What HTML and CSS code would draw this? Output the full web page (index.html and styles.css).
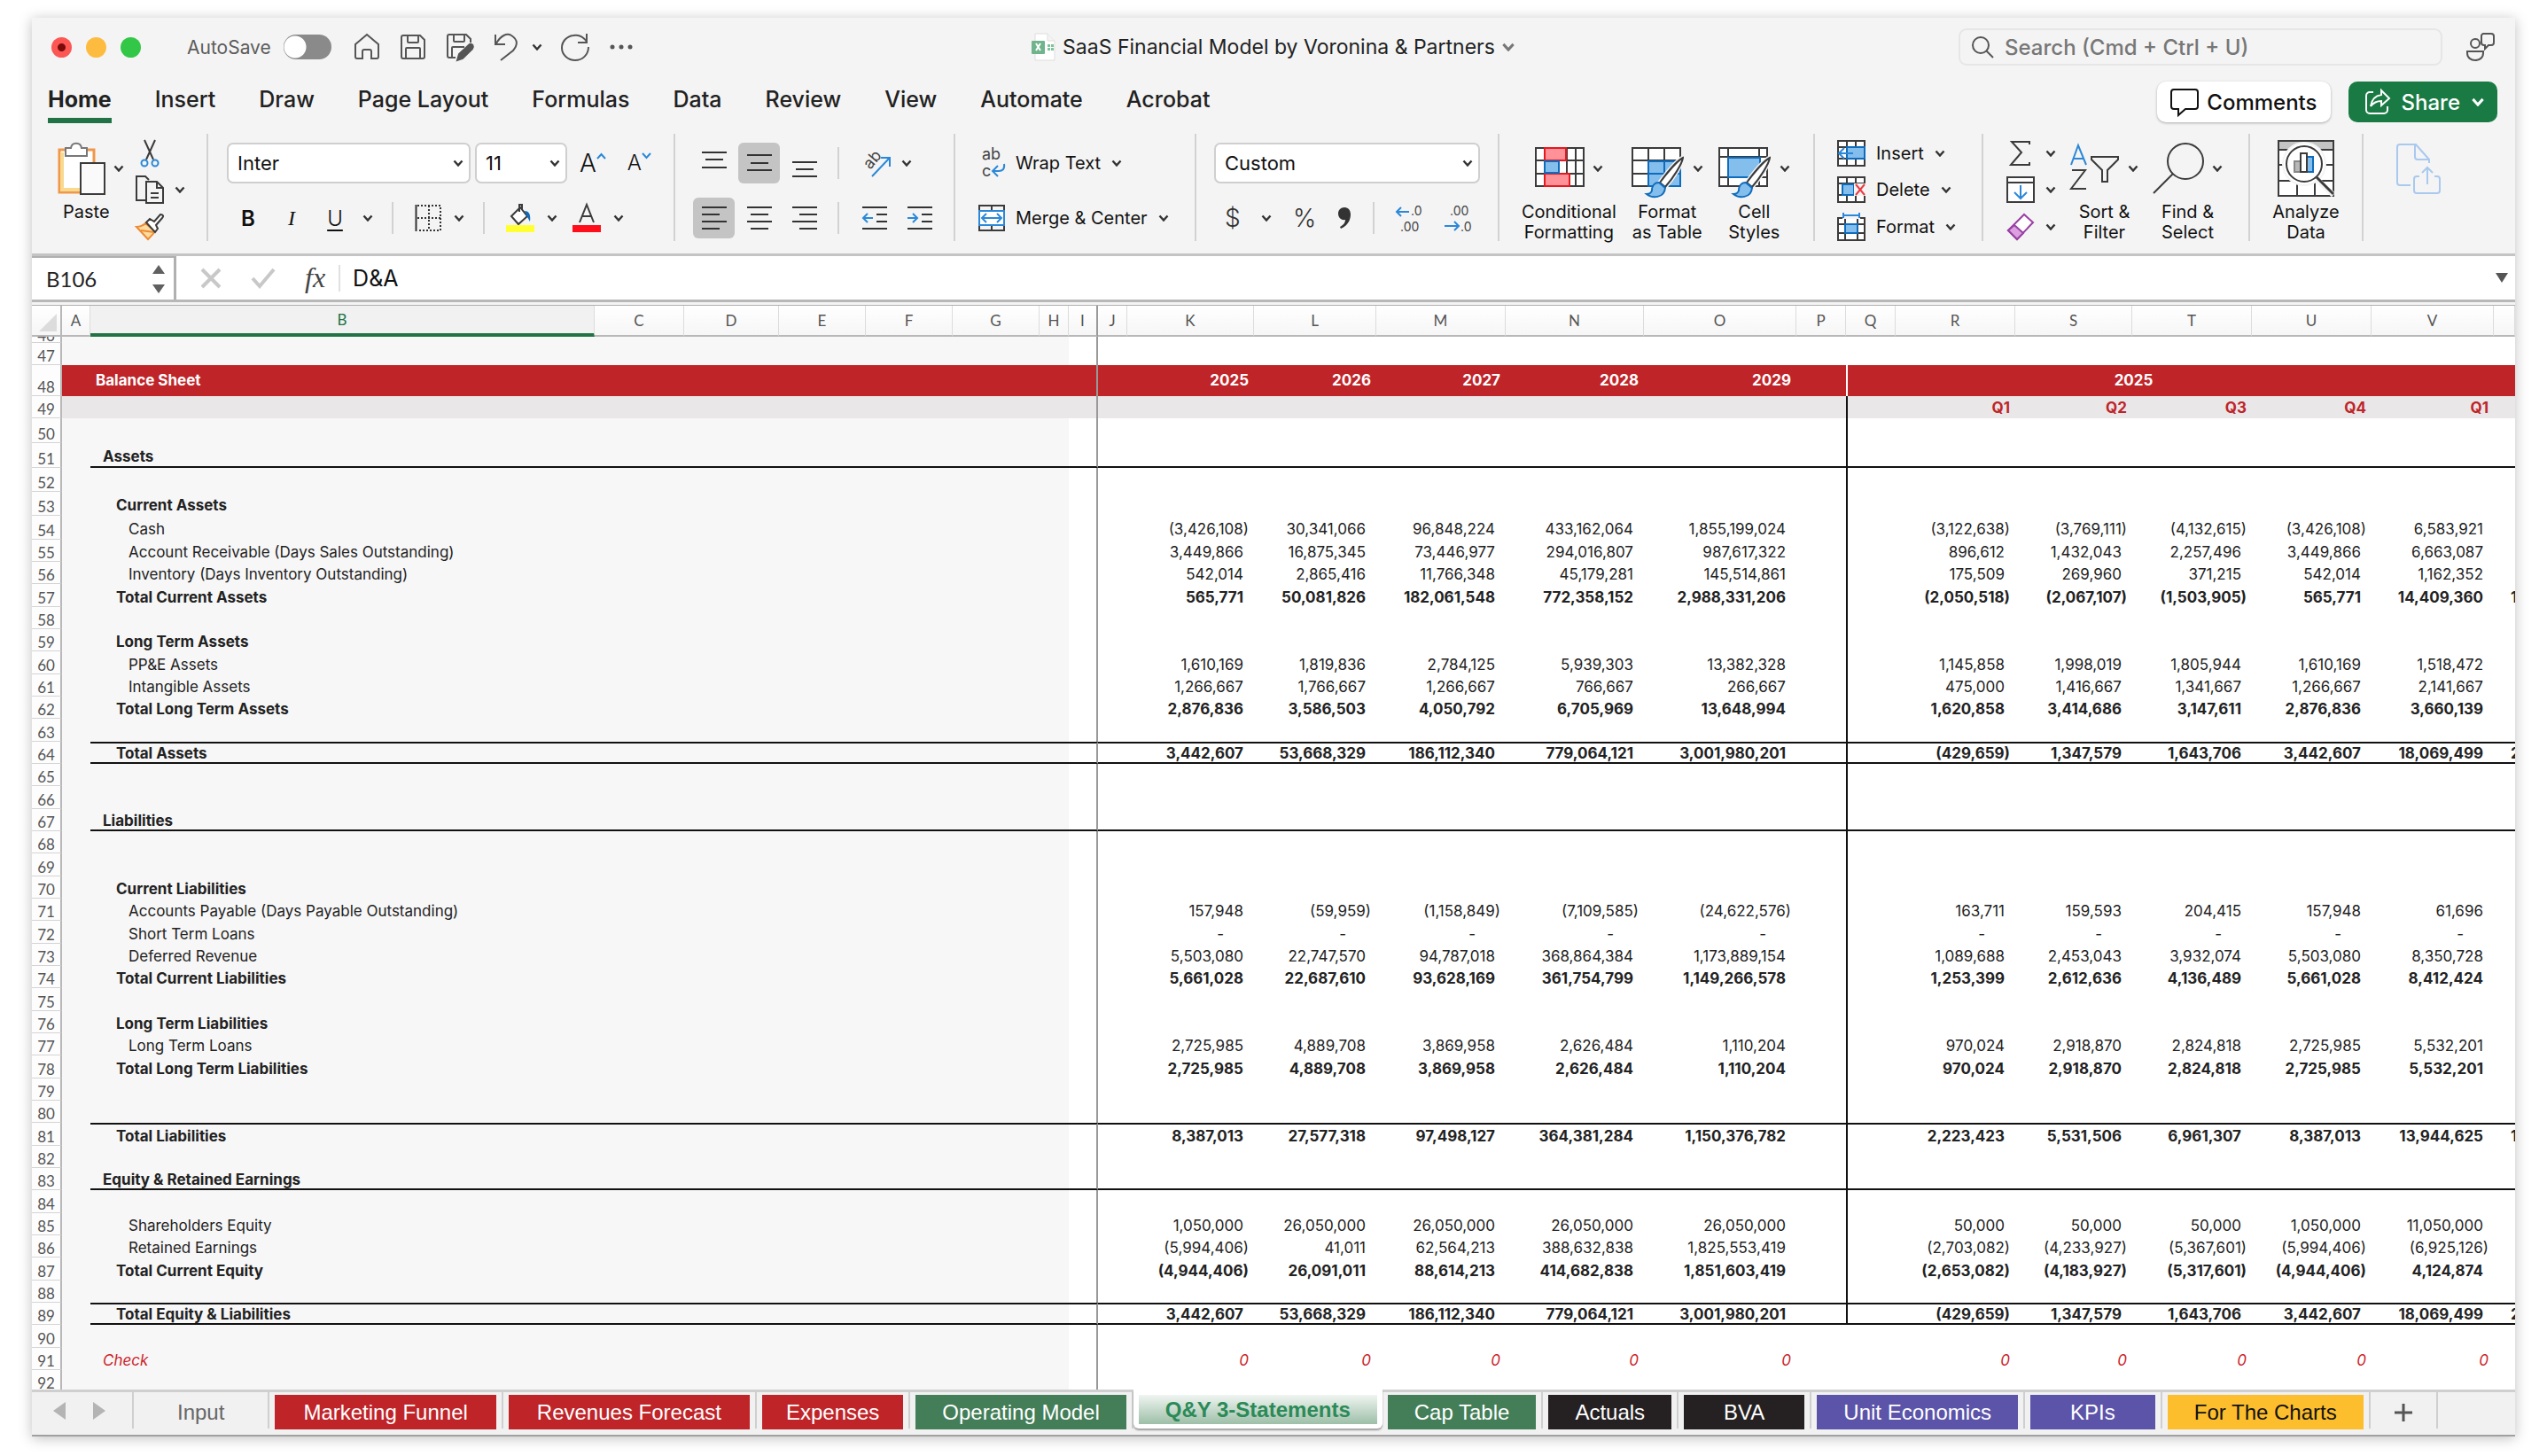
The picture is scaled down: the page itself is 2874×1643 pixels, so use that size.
FILE: index.html
```html
<!DOCTYPE html>
<html lang="en">
<head>
    <meta charset="UTF-8">
    <meta name="viewport" content="width=device-width, initial-scale=1.0">
    <title>SaaS Financial Model by Voronina &amp; Partners</title>
    <link rel="stylesheet" href="styles.css">
</head>
<body>
    <svg class="defs" width="0" height="0">
        <symbol id="chev" viewBox="0 0 12 8"><path d="M1.5 1.5 6 6.5 10.500 1.500" fill="none" stroke="currentColor" stroke-width="2.400"/></symbol>
        <symbol id="brush" viewBox="0 0 46 48"><path d="M45 2C39 5 27 19 19 30l6 5C34 25 44 9 45 2z" fill="#fff" stroke="#f4f4f4" stroke-width="5"/><path d="M45 2C39 5 27 19 19 30l6 5C34 25 44 9 45 2z" fill="#fff" stroke="#3b3b3b" stroke-width="2"/><path d="M18 30c-6 0-8 5-8 9-1 3-3 4-6 4 6 5 20 5 21-7z" fill="#83beec" stroke="#0f6cbd" stroke-width="2"/></symbol>
    </svg>
    <div class="app">
        <header class="titlebar">
            <div class="tools">
                <span class="light red"></span><span class="light yellow"></span><span class="light green"></span>
                <label class="autosave">AutoSave <input type="checkbox" class="switch"></label>
                <button class="plain" aria-label="Home"><svg width="30" height="32" viewBox="0 0 30 32" class="line"><path d="M2 13 15 2l13 11v14a2 2 0 0 1-2 2h-6v-8a2 2 0 0 0-2-2h-6a2 2 0 0 0-2 2v8H4a2 2 0 0 1-2-2z"/></svg></button>
                <button class="plain" aria-label="Save"><svg width="30" height="30" viewBox="0 0 30 30" class="line"><path d="M2 4a2 2 0 0 1 2-2h19l5 5v19a2 2 0 0 1-2 2H4a2 2 0 0 1-2-2zM9 2v7a1 1 0 0 0 1 1h10a1 1 0 0 0 1-1V2M7 28V17a1 1 0 0 1 1-1h14a1 1 0 0 1 1 1v11"/></svg></button>
                <button class="plain" aria-label="Save as"><svg width="32" height="32" viewBox="0 0 32 32" class="line"><path d="M11 28H4a2 2 0 0 1-2-2V4a2 2 0 0 1 2-2h19l5 5v4M9 2v7a1 1 0 0 0 1 1h10a1 1 0 0 0 1-1V2M7 28V17a1 1 0 0 1 1-1h13"/><path d="M13 31l2-7 12-11c3-1 5 2 3 5L19 29z" fill="#555"/></svg></button>
                <button class="plain" aria-label="Undo"><svg width="28" height="34" viewBox="0 0 28 34" class="line"><path d="M2 3v11h11M3 13C8 4 15 1 20 4c8 5 7 11 2 17L8 32"/></svg></button>
                <svg class="chev"><use href="#chev"/></svg>
                <button class="plain" aria-label="Redo"><svg width="34" height="34" viewBox="0 0 34 34" class="line"><path d="M30 2v10H20M30 11C26 5 20 3 15 4 7 5 2 11 2 18c0 8 7 14 15 14s15-6 15-15"/></svg></button>
                <button class="plain" aria-label="More"><svg width="26" height="6" viewBox="0 0 26 6" fill="#555"><circle cx="3" cy="3" r="2.500"/><circle cx="13" cy="3" r="2.500"/><circle cx="23" cy="3" r="2.500"/></svg></button>
            </div>
            <div class="doc-title">
                <svg width="28" height="32" viewBox="0 0 28 32"><path d="M4 1h14l8 8v22H4z" fill="#fff" stroke="#ddd"/><path d="M18 1v8h8" fill="#f4f4f4" stroke="#ddd"/><path d="M18 13h3v3h-3zm4 0h3v3h-3zm-4 4h3v3h-3zm4 0h3v3h-3z" fill="#7fc39b"/><rect y="9" width="15" height="15" rx="1" fill="#6fb48c"/><path d="m5 12 5 8M10 12l-5 8" stroke="#fff" stroke-width="2"/></svg>
                <span>SaaS Financial Model by Voronina &amp; Partners</span>
                <svg class="chev wide"><use href="#chev"/></svg>
            </div>
            <div class="finder">
                <label class="search"><svg width="26" height="26" viewBox="0 0 26 26" class="line"><circle cx="11" cy="11" r="9"/><path d="m17 17 8 8"/></svg><input type="text" placeholder="Search (Cmd + Ctrl + U)" aria-label="Search"></label>
                <button class="plain" aria-label="Presence"><svg width="34" height="34" viewBox="0 0 34 34" class="line"><circle cx="11" cy="13" r="5"/><path d="M2 22h18v2c0 5-4 8-9 8s-9-3-9-8zM20 2h9a3 3 0 0 1 3 3v7a3 3 0 0 1-3 3h-3l-4 4v-4h-1a3 3 0 0 1-3-3V4a3 3 0 0 1 2-2z"/></svg></button>
            </div>
        </header>

        <nav class="menu">
            <a href="#" class="current">Home</a><a href="#">Insert</a><a href="#">Draw</a><a href="#">Page Layout</a><a href="#">Formulas</a><a href="#">Data</a><a href="#">Review</a><a href="#">View</a><a href="#">Automate</a><a href="#">Acrobat</a>
            <div class="menu-right">
                <button class="comments"><svg width="32" height="32" viewBox="0 0 32 32" fill="none" stroke="#111" stroke-width="2"><path d="M4 2h24a3 3 0 0 1 3 3v16a3 3 0 0 1-3 3H17l-8 7v-7H4a3 3 0 0 1-3-3V5a3 3 0 0 1 3-3z"/></svg>Comments</button>
                <button class="share"><svg width="30" height="30" viewBox="0 0 30 30" fill="none" stroke="#fff" stroke-width="2"><path d="M10 4H6a4 4 0 0 0-4 4v16a4 4 0 0 0 4 4h16a4 4 0 0 0 4-4v-4M19 2l9 9-9 8v-5c-6 0-9 2-12 6 1-7 5-12 12-13z"/></svg>Share<svg class="chev wide"><use href="#chev"/></svg></button>
            </div>
        </nav>

        <section class="ribbon">
            <div class="group clipboard">
                <div class="big">
                    <div class="pic"><svg width="54" height="60" viewBox="0 0 54 60"><path d="M2 9h39v48H2z" fill="#fff" stroke="#f0974a" stroke-width="3"/><path d="M5 12v42h22" fill="none" stroke="#f8d98e" stroke-width="4"/><path d="M9 16V7h6c1-7 11-7 12 0h6v9z" fill="#fff" stroke="#777" stroke-width="2"/><path d="M26 24h27v35H26z" fill="#fafafa" stroke="#3b3b3b" stroke-width="2"/></svg><svg class="chev"><use href="#chev"/></svg></div>
                    <button class="plain">Paste</button>
                </div>
                <div class="stack">
                    <button class="plain" aria-label="Cut"><svg width="22" height="32" viewBox="0 0 22 32" fill="none" stroke="#3b3b3b" stroke-width="2"><path d="M5 1l10 22M17 1 7 23"/><g stroke="#2b88d8"><circle cx="5" cy="27" r="3.500"/><circle cx="17" cy="27" r="3.500"/></g></svg></button>
                    <button class="plain" aria-label="Copy"><svg width="32" height="32" viewBox="0 0 32 32" fill="none" stroke="#3b3b3b" stroke-width="2"><path d="M11 28H1V1h10l4 4"/><path d="M12 7h12l7 7v17H12zM24 7v7h7M17 20h9M17 25h9"/></svg><svg class="chev"><use href="#chev"/></svg></button>
                    <button class="plain" aria-label="Format painter"><svg width="32" height="30" viewBox="0 0 32 30"><path d="M1 15c5 0 8-2 10-4l11 9c-2 3-5 6-8 9z" fill="#fbdca0" stroke="#ef8a33" stroke-width="2"/><path d="m6 19 15 2" stroke="#ef8a33" stroke-width="2"/><path d="m12 10 4-4 5 3 7-8c3 0 4 2 2 4l-7 8 2 4-3 4z" fill="#fff" stroke="#3b3b3b" stroke-width="2"/></svg></button>
                </div>
            </div>

            <div class="group rows font">
                <div class="row">
                    <div class="combo name"><select aria-label="Font"><option>Inter</option></select><svg class="chev"><use href="#chev"/></svg></div>
                    <div class="combo size"><select aria-label="Font size"><option>11</option></select><svg class="chev"><use href="#chev"/></svg></div>
                    <button class="plain grow">A<svg width="11" height="8" viewBox="0 0 11 8"><path d="m1 7 4.500-5L10 7" fill="none" stroke="#2b88d8" stroke-width="2"/></svg></button>
                    <button class="plain grow small">A<svg width="11" height="8" viewBox="0 0 11 8"><path d="m1 1 4.500 5L10 1" fill="none" stroke="#2b88d8" stroke-width="2"/></svg></button>
                </div>
                <div class="row marks">
                    <button class="plain bold">B</button>
                    <button class="plain italic">I</button>
                    <button class="plain underline">U</button>
                    <svg class="chev"><use href="#chev"/></svg>
                    <i class="bar"></i>
                    <button class="plain" aria-label="Borders"><svg width="30" height="32" viewBox="0 0 30 32" fill="none" stroke="#333" stroke-width="2"><path d="M1.500 1v30" /><path d="M3 2h26v28H3M16 2v28M3 16h26" stroke-dasharray="2 2"/></svg></button>
                    <svg class="chev"><use href="#chev"/></svg>
                    <i class="bar"></i>
                    <button class="plain" aria-label="Fill colour"><svg width="32" height="32" viewBox="0 0 32 32"><path d="M6 14 16 4l8 10-10 9zM15 9V1h3v5" fill="#fff" stroke="#3b3b3b" stroke-width="2"/><path d="M21 8c5 0 7 4 6 12l-3-5z" fill="#0f6cbd"/><path d="M0 24h32v8H0z" fill="#ffff33"/></svg></button>
                    <svg class="chev"><use href="#chev"/></svg>
                    <button class="plain" aria-label="Font colour"><svg width="32" height="32" viewBox="0 0 32 32"><path d="M8 21 16 1l8 20M11 14h10" fill="none" stroke="#3b3b3b" stroke-width="2"/><path d="M0 24h32v8H0z" fill="#ff0d1a"/></svg></button>
                    <svg class="chev"><use href="#chev"/></svg>
                </div>
            </div>

            <div class="group rows align">
                <div class="row">
                    <button class="tile" aria-label="Top align"><svg width="28" height="36" viewBox="0 0 28 36" class="lines"><path d="M0 6h28M4 14h20M0 23h28"/></svg></button>
                    <button class="tile on" aria-label="Middle align"><svg width="28" height="36" viewBox="0 0 28 36" class="lines"><path d="M0 9h28M4 18h20M0 26h28"/></svg></button>
                    <button class="tile" aria-label="Bottom align"><svg width="28" height="36" viewBox="0 0 28 36" class="lines"><path d="M0 17h28M4 25h20M0 33h28"/></svg></button>
                    <i class="bar"></i>
                    <button class="plain" aria-label="Orientation"><svg width="32" height="32" viewBox="0 0 32 32"><text transform="translate(9 24) rotate(-50)" class="glyph">ab</text><path d="M11 31 30 11M21 10h10v10" fill="none" stroke="#2b88d8" stroke-width="2"/></svg></button>
                    <svg class="chev"><use href="#chev"/></svg>
                </div>
                <div class="row">
                    <button class="tile on" aria-label="Align left"><svg width="28" height="28" viewBox="0 0 28 28" class="lines"><path d="M0 2h28M0 10h20M0 18h28M0 26h20"/></svg></button>
                    <button class="tile" aria-label="Centre"><svg width="28" height="28" viewBox="0 0 28 28" class="lines"><path d="M0 2h28M4 10h20M0 18h28M4 26h20"/></svg></button>
                    <button class="tile" aria-label="Align right"><svg width="28" height="28" viewBox="0 0 28 28" class="lines"><path d="M0 2h28M8 10h20M0 18h28M8 26h20"/></svg></button>
                    <i class="bar"></i>
                    <button class="plain indent" aria-label="Decrease indent"><svg width="28" height="28" viewBox="0 0 28 28" class="lines"><path d="M0 2h28M16 10h12M16 18h12M0 26h28"/><path d="M12 14H1M6 9l-5 5 5 5" stroke="#2b88d8"/></svg></button>
                    <button class="plain indent" aria-label="Increase indent"><svg width="28" height="28" viewBox="0 0 28 28" class="lines"><path d="M0 2h28M16 10h12M16 18h12M0 26h28"/><path d="M0 14h11M6 9l5 5-5 5" stroke="#2b88d8"/></svg></button>
                </div>
            </div>

            <div class="group rows wrap">
                <div class="row"><button class="plain text"><svg width="30" height="32" viewBox="0 0 30 32"><text x="4" y="12" class="glyph">ab</text><text x="4" y="31" class="glyph">c</text><path d="M29 17c1 6-2 8-6 8h-6M22 19l-6 6 6 6" fill="none" stroke="#2b88d8" stroke-width="2"/></svg>Wrap Text<svg class="chev"><use href="#chev"/></svg></button></div>
                <div class="row"><button class="plain text"><svg width="30" height="32" viewBox="0 0 30 32" fill="none" stroke="#3b3b3b" stroke-width="2"><path d="M1 2h28v28H1zM15 2v5M15 25v5"/><path d="M1 8h28v16H1z" fill="#fff" stroke="#2b88d8"/><path d="M5 16h20M9 11l-5 5 5 5M21 11l5 5-5 5" stroke="#2b88d8"/></svg>Merge &amp; Center<svg class="chev"><use href="#chev"/></svg></button></div>
            </div>

            <div class="group rows number">
                <div class="row"><div class="combo"><select aria-label="Number format"><option>Custom</option></select><svg class="chev"><use href="#chev"/></svg></div></div>
                <div class="row">
                    <button class="plain sign">$</button>
                    <svg class="chev"><use href="#chev"/></svg>
                    <button class="plain sign">%</button>
                    <button class="plain" aria-label="Comma style"><svg width="16" height="26" viewBox="0 0 16 26"><path d="M8 1c5 0 7 4 7 8 0 7-4 13-11 16l-1-2c4-2 6-5 6-8-5 1-8-3-8-7s3-7 7-7z" fill="#333"/></svg></button>
                    <i class="bar"></i>
                    <button class="plain" aria-label="Increase decimal"><svg width="32" height="32" viewBox="0 0 32 32"><text x="18" y="13" class="digits">.0</text><text x="6" y="31" class="digits">.00</text><path d="M16 9H2M7 4l-5 5 5 5" fill="none" stroke="#2b88d8" stroke-width="2"/></svg></button>
                    <button class="plain" aria-label="Decrease decimal"><svg width="32" height="32" viewBox="0 0 32 32"><text x="6" y="13" class="digits">.00</text><text x="18" y="31" class="digits">.0</text><path d="M0 25h16M11 20l5 5-5 5" fill="none" stroke="#2b88d8" stroke-width="2"/></svg></button>
                </div>
            </div>

            <div class="group bigs styles">
                <div class="big">
                    <div class="pic"><svg width="56" height="60" viewBox="0 0 56 60" fill="#fff" stroke="#3b3b3b" stroke-width="2"><path d="M1 7h54v43H1zM1 21h54M1 36h54M11 7v43M36 7v43M46 7v43"/><path d="M11 7h24v14H11zM11 36h28v14H11z" fill="#ff9298" stroke="#e3191f"/><path d="M11 22h16v13H11z" fill="#83beec" stroke="#0f6cbd"/></svg><svg class="chev"><use href="#chev"/></svg></div>
                    <button class="plain">Conditional<br>Formatting</button>
                </div>
                <div class="big">
                    <div class="pic"><svg width="60" height="60" viewBox="0 0 60 60" fill="#fff" stroke="#3b3b3b" stroke-width="2"><path d="M1 7h54v43H1zM1 21h54M1 36h54M19 7v43M37 7v43"/><path d="M19 22h36v28H19zM19 36h36M37 22v28" fill="#83beec" stroke="#0f6cbd"/><use href="#brush" x="13" y="16" width="46" height="48"/></svg><svg class="chev"><use href="#chev"/></svg></div>
                    <button class="plain">Format<br>as Table</button>
                </div>
                <div class="big">
                    <div class="pic"><svg width="60" height="60" viewBox="0 0 60 60" fill="#fff" stroke="#3b3b3b" stroke-width="2"><path d="M1 7h54v43H1zM1 17h54M1 40h54M11 7v43M46 7v43"/><path d="M11 18h36v22H11z" fill="#83beec" stroke="#0f6cbd"/><use href="#brush" x="13" y="16" width="46" height="48"/></svg><svg class="chev"><use href="#chev"/></svg></div>
                    <button class="plain">Cell<br>Styles</button>
                </div>
            </div>

            <div class="group stack cells">
                <button class="plain text"><svg width="32" height="30" viewBox="0 0 32 30" fill="#fff" stroke="#3b3b3b" stroke-width="2"><path d="M1 1h30v28H1zM1 8h30M1 21h30M11 1v28M21 1v28"/><path d="M11 8h20v13H11z" fill="#83beec" stroke="#0f6cbd"/><path d="M18 15H2M8 9l-6 6 6 6" stroke="#2b88d8"/></svg>Insert<svg class="chev"><use href="#chev"/></svg></button>
                <button class="plain text"><svg width="32" height="30" viewBox="0 0 32 30" fill="#fff" stroke="#3b3b3b" stroke-width="2"><path d="M1 1h30v28H1zM1 8h30M1 21h30M11 1v28M21 1v28"/><path d="M6 9h13v12H6z" fill="#83beec" stroke="#0f6cbd"/><path d="M19 8h14v14H19z" stroke="none" fill="#f4f4f4"/><path d="m21 9 10 12M31 9 21 21" stroke="#ec3b43"/></svg>Delete<svg class="chev"><use href="#chev"/></svg></button>
                <button class="plain text"><svg width="32" height="32" viewBox="0 0 32 32" fill="#fff" stroke="#3b3b3b" stroke-width="2"><path d="M1 6h30v25H1zM1 13h30M1 23h30M9 6v25M23 6v25"/><path d="M6 0h20v7H6z" stroke="none" fill="#f4f4f4"/><path d="M9 13h14v10H9z" fill="#83beec" stroke="#0f6cbd"/><path d="M7 3h18M7 0v6M25 0v6" stroke="#2b88d8"/></svg>Format<svg class="chev"><use href="#chev"/></svg></button>
            </div>

            <div class="group editing">
                <div class="stack">
                    <button class="plain" aria-label="AutoSum"><svg width="32" height="30" viewBox="0 0 32 30" fill="none" stroke="#3b3b3b" stroke-width="2"><path d="M26 5V2H6l11 12L5 28h21v-3"/></svg><svg class="chev"><use href="#chev"/></svg></button>
                    <button class="plain" aria-label="Fill"><svg width="32" height="30" viewBox="0 0 32 30" fill="#fff" stroke="#3b3b3b" stroke-width="2"><path d="M1 1h30v28H1zM1 7h30"/><path d="M16 10v14M9 18l7 7 7-7" stroke="#2b88d8" fill="none"/></svg><svg class="chev"><use href="#chev"/></svg></button>
                    <button class="plain" aria-label="Clear"><svg width="32" height="32" viewBox="0 0 32 32" fill="#fff" stroke="#9a3fa5" stroke-width="2"><path d="m2 20 18-18 10 9-18 19z"/><path d="m2 20 7-6 10 9-7 7z" fill="#dba0dd"/></svg><svg class="chev"><use href="#chev"/></svg></button>
                </div>
                <div class="big">
                    <div class="pic"><svg width="56" height="60" viewBox="0 0 56 60" fill="none" stroke="#3b3b3b" stroke-width="2"><path d="M1 26 9 4l9 22M4 19h11" stroke="#2b88d8"/><path d="M2 32h15L1 53h17M24 17h30v3L42 32v13h-6V32L24 20z"/></svg><svg class="chev"><use href="#chev"/></svg></div>
                    <button class="plain">Sort &amp;<br>Filter</button>
                </div>
                <div class="big">
                    <div class="pic"><svg width="58" height="60" viewBox="0 0 58 60" fill="none" stroke="#3b3b3b" stroke-width="2"><circle cx="37" cy="22" r="20"/><path d="M23 36 1 58"/></svg><svg class="chev"><use href="#chev"/></svg></div>
                    <button class="plain">Find &amp;<br>Select</button>
                </div>
            </div>

            <div class="group analyze">
                <div class="big">
                    <div class="pic"><svg width="64" height="64" viewBox="0 0 64 64" fill="#fff" stroke="#3b3b3b" stroke-width="2"><path d="M1 1h62v62H1z"/><path d="M2 2h60v8H2z" fill="#c4c4c4" stroke="none"/><path d="M1 11h62M1 28h62M1 46h62M22 46v17M42 46v17"/><circle cx="30" cy="27" r="24" stroke="#f4f4f4"/><path d="m44 44 19 18" stroke="#f4f4f4" stroke-width="6"/><circle cx="30" cy="27" r="20"/><path d="m44 42 19 19" stroke-width="3"/><path d="M19 24h7v12h-7z" fill="#b8b8b8" stroke="#888"/><path d="M33 19h7v17h-7z" fill="#83beec" stroke="#0f6cbd"/><path d="M26 15h7v21h-7z"/></svg></div>
                    <button class="plain">Analyze<br>Data</button>
                </div>
            </div>
            <div class="group pdf">
                <button class="plain" aria-label="Share PDF"><svg width="50" height="58" viewBox="0 0 50 58" fill="none" stroke="#a9c9ef" stroke-width="2"><path d="M16 47H4a3 3 0 0 1-3-3V4a3 3 0 0 1 3-3h18l15 17v4M21 1v14a3 3 0 0 0 3 3h13M26 37h-3a3 3 0 0 0-3 3v13a3 3 0 0 0 3 3h23a3 3 0 0 0 3-3V40a3 3 0 0 0-3-3h-3M35 46V27M29 33l6-6 6 6"/></svg></button>
            </div>
        </section>

        <section class="formula">
            <div class="namebox"><input type="text" value="B106" aria-label="Name box"><svg width="14" height="32" viewBox="0 0 14 32" fill="#606060"><path d="M0 10 7 0l7 10zM0 22h14L7 32z"/></svg></div>
            <button class="plain" aria-label="Cancel"><svg width="24" height="24" viewBox="0 0 24 24"><path d="m2 2 20 20M22 2 2 22" stroke="#c8c8c8" stroke-width="4"/></svg></button>
            <button class="plain" aria-label="Enter"><svg width="28" height="24" viewBox="0 0 28 24"><path d="m2 12 8 9L26 2" fill="none" stroke="#c8c8c8" stroke-width="4"/></svg></button>
            <button class="plain fx">fx</button>
            <input type="text" class="entry" value="D&amp;A" aria-label="Formula">
            <svg width="14" height="11" viewBox="0 0 14 11"><path d="M0 0h14L7 11z" fill="#555"/></svg>
        </section>

        <main class="sheet">
            <table>
                <colgroup>
                    <col class="c34"><col class="c32"><col class="cb"><col class="c101"><col class="c107"><col class="c98"><col class="c98"><col class="c98"><col class="c33"><col class="c33"><col class="c33"><col class="c143"><col class="c138"><col class="c146"><col class="c156"><col class="c172"><col class="c56"><col class="c56"><col class="c135"><col class="c132"><col class="c135"><col class="c135"><col class="c138"><col>
                </colgroup>
                <thead>
                    <tr><th class="corner"><svg width="20" height="20" viewBox="0 0 20 20"><path d="M20 0v20H0z" fill="#dcdcdc"/></svg></th><th>A</th><th class="selected">B</th><th>C</th><th>D</th><th>E</th><th>F</th><th>G</th><th>H</th><th class="freeze">I</th><th>J</th><th>K</th><th>L</th><th>M</th><th>N</th><th>O</th><th>P</th><th>Q</th><th>R</th><th>S</th><th>T</th><th>U</th><th>V</th><th></th></tr>
                </thead>
                <tbody id="rows"></tbody>
            </table>
        </main>

        <footer class="tabs">
            <div class="arrows">
                <button class="plain" aria-label="Previous sheet"><svg width="14" height="20" viewBox="0 0 14 20"><path d="M14 0v20L0 10z" fill="#b4b4b4"/></svg></button>
                <button class="plain" aria-label="Next sheet"><svg width="14" height="20" viewBox="0 0 14 20"><path d="M0 0v20l14-10z" fill="#b4b4b4"/></svg></button>
            </div>
            <div class="tab input"><button>Input</button></div>
            <div class="tab crimson"><button>Marketing Funnel</button></div>
            <div class="tab crimson"><button>Revenues Forecast</button></div>
            <div class="tab crimson snug"><button>Expenses</button></div>
            <div class="tab forest"><button>Operating Model</button></div>
            <div class="tab active"><button>Q&amp;Y 3-Statements</button></div>
            <div class="tab forest"><button>Cap Table</button></div>
            <div class="tab black"><button>Actuals</button></div>
            <div class="tab black wide"><button>BVA</button></div>
            <div class="tab violet"><button>Unit Economics</button></div>
            <div class="tab violet wide"><button>KPIs</button></div>
            <div class="tab amber"><button>For The Charts</button></div>
            <div class="tab add"><button aria-label="Add sheet"><svg width="20" height="20" viewBox="0 0 20 20"><path d="M10 0v20M0 10h20" stroke="#555" stroke-width="3"/></svg></button></div>
        </footer>
    </div>
    <script src="script.js"></script>
</body>
</html>
```
FILE: styles.css
```css
* {
    box-sizing: border-box;
}

body {
    margin: 0;
    background: #fff;
    font-family: Inter, "Liberation Sans", sans-serif;
    color: #222;
}

button, input, select {
    font: inherit;
    color: inherit;
}

svg {
    flex: none;
    display: block;
    overflow: visible;
}

.defs {
    position: absolute;
}

.app {
    display: flex;
    flex-direction: column;
    height: calc(100vh - 42px);
    margin: 20px 36px 22px;
    background: #f4f4f4;
    box-shadow: 0 2px 14px rgba(0, 0, 0, 0.25);
}

.plain {
    display: flex;
    align-items: center;
    justify-content: center;
    padding: 0;
    border: 0;
    background: none;
}

.chev {
    width: 12px;
    height: 8px;
    color: #333;
}

.chev.wide {
    width: 16px;
    height: 10px;
    color: #777;
}

.line {
    fill: none;
    stroke: #555;
    stroke-width: 2;
}

.lines {
    fill: none;
    stroke: #333;
    stroke-width: 2;
}

/* title bar */
.titlebar {
    display: grid;
    grid-template-columns: 1fr auto 1fr;
    align-items: center;
    height: 66px;
    padding: 0 22px;
}

.tools, .doc-title, .finder {
    display: flex;
    align-items: center;
}

.light {
    width: 23px;
    height: 23px;
    margin-right: 16px;
    border-radius: 50%;
}

.red {
    background: radial-gradient(circle, #7a0b0b 4px, #fc5753 5px);
}

.yellow {
    background: #fdbc40;
}

.green {
    background: #33c748;
}

.autosave {
    display: flex;
    align-items: center;
    gap: 14px;
    margin: 0 25px 0 36px;
    font-size: 21px;
    color: #5c5c5c;
}

.switch {
    appearance: none;
    width: 54px;
    height: 28px;
    margin: 0;
    border-radius: 14px;
    background: radial-gradient(circle at 13px 14px, #fff 12px, transparent 13px), #8a8a8a;
}

.tools .plain {
    margin-right: 22px;
}

.tools .chev {
    margin: 0 20px 0 -7px;
}

.doc-title {
    gap: 7px;
    font-size: 23px;
}

.finder {
    justify-content: flex-end;
    gap: 26px;
}

.search {
    display: flex;
    align-items: center;
    gap: 10px;
    width: 546px;
    height: 42px;
    padding: 0 12px;
    border: 2px solid #e6e6e6;
    border-radius: 9px;
}

.search input {
    flex: 1;
    border: 0;
    background: none;
    font-size: 24px;
    font-weight: 500;
}

.search input::placeholder {
    color: #777;
}

/* menu */
.menu {
    display: flex;
    align-items: flex-start;
    gap: 49px;
    height: 65px;
    padding: 10px 20px 0 18px;
}

.menu a {
    padding-bottom: 5px;
    border-bottom: 6px solid transparent;
    font-size: 25px;
    line-height: 32px;
    font-weight: 500;
    color: #222;
    text-decoration: none;
}

.menu .current {
    font-weight: 700;
    border-image: linear-gradient(#217346, #217346) 1;
}

.menu-right {
    display: flex;
    gap: 20px;
    margin: -4px 0 0 auto;
}

.menu-right button {
    display: flex;
    align-items: center;
    height: 46px;
    border: 0;
    border-radius: 10px;
    font-size: 24px;
    font-weight: 500;
}

.comments {
    gap: 9px;
    padding: 0 15px;
    background: #fff;
    box-shadow: 0 1px 3px rgba(0, 0, 0, 0.3);
    color: #111;
}

.share {
    gap: 12px;
    padding: 0 14px 0 18px;
    background: #197b43;
    color: #fff;
}

.share .chev {
    color: #fff;
}

/* ribbon */
.ribbon {
    display: grid;
    grid-template-columns: 199px 527px 316px 272px 342px 356px 190px 301px 128px 1fr;
    height: 138px;
    border-bottom: 3px solid #c4c4c4;
    font-size: 20px;
    color: #111;
}

.group {
    display: flex;
    height: 121px;
    border-right: 2px solid #d2d2d2;
}

.group:last-child {
    border-right: 0;
}

.rows {
    flex-direction: column;
    gap: 16px;
    padding-top: 10px;
}

.row {
    display: flex;
    align-items: center;
    height: 46px;
}

.bar {
    width: 2px;
    height: 36px;
    background: #d2d2d2;
}

.big {
    display: flex;
    flex-direction: column;
    align-items: center;
    line-height: 23px;
}

.big .plain {
    text-align: center;
}

.pic {
    display: flex;
    align-items: center;
    gap: 9px;
    height: 60px;
    margin: 9px 0 8px;
}

.stack {
    display: flex;
    flex-direction: column;
    gap: 9px;
    padding-top: 6px;
}

.stack .plain {
    gap: 12px;
    height: 34px;
}

.text {
    gap: 12px;
}

.glyph {
    font-size: 18px;
    fill: #444;
}

.digits {
    font-size: 14px;
    fill: #444;
}

.clipboard {
    padding: 0 24px 0 29px;
    justify-content: space-between;
}

.clipboard .big {
    align-items: flex-start;
}

.clipboard .big .plain {
    padding-left: 6px;
}

.clipboard .plain {
    justify-content: flex-start;
}

.clipboard .stack .plain:first-child {
    padding-left: 5px;
}

.combo {
    display: grid;
    align-items: center;
    flex: 1;
}

.combo > * {
    grid-area: 1 / 1;
}

.combo .chev {
    justify-self: end;
    margin-right: 8px;
    pointer-events: none;
}

.combo select {
    appearance: none;
    height: 46px;
    padding: 0 10px;
    border: 2px solid #cfcfcf;
    border-radius: 7px;
    background: #fff;
    font-size: 22px;
    color: #111;
}

.font {
    padding-left: 21px;
}

.font .name {
    flex: 0 0 275px;
    margin-right: 5px;
}

.font .size {
    flex: 0 0 104px;
    margin-right: 14px;
}

.grow {
    align-items: flex-start;
    margin-right: 24px;
    font-size: 28px;
    line-height: 32px;
    font-weight: 300;
}

.grow svg {
    margin-top: 4px;
}

.grow.small {
    font-size: 24px;
}

.marks {
    padding-left: 12px;
}

.marks .plain {
    min-width: 30px;
}

.marks .chev {
    margin: 0 17px 0 14px;
}

.marks .bold, .marks .italic, .marks .underline {
    width: 24px;
    min-width: 24px;
    margin-right: 25px;
    font-size: 24px;
}

.marks .underline {
    margin-right: 5px;
    font-weight: 300;
    text-decoration: underline;
    text-underline-offset: 4px;
}

.marks .bar {
    margin: 0 24px 0 4px;
}

.bold {
    font-weight: 600;
}

.italic {
    font-family: "Liberation Serif", serif;
    font-style: italic;
}

.tile {
    display: flex;
    align-items: center;
    justify-content: center;
    width: 47px;
    height: 46px;
    margin-right: 4px;
    padding: 0;
    border: 0;
    border-radius: 6px;
    background: none;
}

.tile.on {
    background: #c4c4c4;
}

.align {
    padding-left: 20px;
}

.align .bar {
    margin: 0 26px 0 10px;
}

.align .chev {
    margin-left: 12px;
}

.indent {
    margin-right: 23px;
}

.wrap {
    padding-left: 26px;
}

.number {
    padding: 10px 20px 0;
}

.number .row {
    justify-content: space-between;
}

.number .row:last-child {
    padding: 0 8px 0 12px;
}

.sign {
    font-size: 28px;
    font-weight: 300;
    color: #333;
}

.styles {
    gap: 17px;
    padding-left: 25px;
}

.cells {
    padding-left: 25px;
    align-items: flex-start;
}

.editing {
    gap: 16px;
    padding-left: 26px;
}

.analyze {
    justify-content: center;
}

.pdf {
    padding-left: 37px;
}

.pdf .plain {
    height: 80px;
}

/* formula bar */
.formula {
    display: flex;
    align-items: center;
    gap: 33px;
    height: 52px;
    padding-right: 8px;
    border-bottom: 3px solid #b8b8b8;
    background: #fff;
}

.namebox {
    display: flex;
    align-items: center;
    justify-content: space-between;
    align-self: stretch;
    width: 163px;
    margin-right: -6px;
    padding: 0 10px 0 16px;
    border-top: 2px solid #b0b0b0;
    border-right: 3px solid #b0b0b0;
    font-family: Lato, sans-serif;
    font-size: 24px;
}

.formula input {
    min-width: 0;
    padding: 0;
    border: 0;
    background: none;
}

.namebox input {
    width: 90px;
}

.fx {
    font-family: "Liberation Serif", serif;
    font-size: 32px;
    font-style: italic;
    color: #444;
}

.formula .entry {
    flex: 1;
    height: 30px;
    margin-left: -18px;
    padding-left: 14px;
    border-left: 2px solid #e0e0e0;
    font-size: 25px;
    color: #111;
}

/* grid */
.sheet {
    flex: 1;
    min-height: 0;
    overflow: hidden;
    margin-top: 3px;
    border-top: 1px solid #b0b0b0;
    background: #fff;
}

table {
    width: 100%;
    table-layout: fixed;
    border-collapse: separate;
    border-spacing: 0;
}

.c32 { width: 32px; }
.c33 { width: 33px; }
.c34 { width: 34px; }
.c56 { width: 56px; }
.c98 { width: 98px; }
.c101 { width: 101px; }
.c107 { width: 107px; }
.c132 { width: 132px; }
.c135 { width: 135px; }
.c138 { width: 138px; }
.c143 { width: 143px; }
.c146 { width: 146px; }
.c156 { width: 156px; }
.c172 { width: 172px; }
.cb { width: 569px; }

th {
    padding: 0;
    font-family: Lato, sans-serif;
    font-size: 17px;
    font-weight: 400;
    color: #555;
}

thead th {
    height: 35px;
    border-right: 1px solid #dcdcdc;
    border-bottom: 2px solid #b8b8b8;
    background: linear-gradient(#fff, #f6f6f6);
}

thead .selected {
    border-bottom: 4px solid #217346;
    background: #f1f1f1;
    color: #217346;
}

thead .corner {
    border-right: 2px solid #b8b8b8;
}

.corner svg {
    margin: 4px 0 0 8px;
}

tbody th {
    overflow: hidden;
    border-right: 2px solid #b8b8b8;
    border-bottom: 1px solid #d4d4d4;
    background: #fdfdfd;
    line-height: 18px;
    vertical-align: bottom;
}

td {
    height: 25px;
    padding: 3px 12px 0 0;
    font-size: 17px;
    line-height: 20px;
    text-align: right;
    white-space: nowrap;
}

tbody tr:nth-child(3n) td {
    height: 26px;
}

tbody tr.h27 td {
    height: 27px;
}

tbody tr.h28 td {
    height: 28px;
}

.clip {
    display: flex;
    align-items: flex-end;
    justify-content: center;
    height: 6px;
    overflow: hidden;
    line-height: 14px;
}

tbody tr:first-child td {
    height: 7px;
    padding-top: 0;
}

.a, .label {
    background: #f7f7f7;
}

.label {
    text-align: left;
}

.l0 { padding-left: 6px; }
.l1 { padding-left: 14px; }
.l2 { padding-left: 29px; }
.l3 { padding-left: 43px; }

.freeze {
    border-right: 2px solid #999;
}

.q {
    border-left: 2px solid #111;
}

.neg {
    padding-right: 6px;
}

.nil {
    padding-right: 34px;
}

.next {
    padding-left: 19px;
    padding-right: 0;
    overflow: hidden;
    text-align: left;
}

.strong td {
    font-weight: 700;
}

/* ruled rows: the borders take the place of the padding */
.top td:not(.a) {
    padding-top: 1px;
    border-top: 2px solid #111;
}

.under td:not(.a) {
    border-bottom: 2px solid #111;
}

.banner td {
    padding-top: 0;
    padding-bottom: 2px;
    background: #bf2429;
    color: #fff;
    font-weight: 700;
}

tbody tr.banner td {
    height: 35px;
}

.banner .q {
    border-left-color: #fff;
}

.banner .year {
    padding-right: 0;
    text-align: center;
}

.quarters td {
    padding-top: 1px;
    background: #e9e7e8;
    color: #bf2429;
    font-weight: 700;
}

.check td {
    color: #cc1f2b;
    font-style: italic;
}

/* sheet tabs */
.tabs {
    display: flex;
    height: 53px;
    border-top: 3px solid #cfcfcf;
    border-bottom: 2px solid #a0a0a0;
    background: #f1f1f1;
    font-family: "Liberation Sans", Arial, sans-serif;
    font-size: 24px;
}

.arrows {
    display: flex;
    align-items: center;
    gap: 31px;
    width: 115px;
    padding-left: 24px;
    border-right: 2px solid #cfcfcf;
}

.arrows, .tab {
    height: 41px;
}

.tab {
    padding: 3px 6px 0;
    border-right: 2px solid #cfcfcf;
}

.tab button {
    height: 39px;
    padding: 0 30px;
    border: 0;
    background: none;
}

.input button {
    padding: 0 43px;
    color: #666;
}

.crimson button {
    padding: 0 32px;
    background: #bf2429;
    color: #fff;
}

.snug button {
    padding: 0 27px;
}

.forest button {
    background: #437e58;
    color: #fff;
}

.black button {
    background: #252122;
    color: #fff;
}

.violet button {
    background: #5b54a9;
    color: #fff;
}

.wide button {
    padding: 0 45px;
}

.amber button {
    background: #fcbe2d;
    color: #111;
}

.active {
    height: 44px;
    margin-top: -3px;
    padding-top: 6px;
    border: 0;
    border-radius: 0 0 6px 6px;
    background: #fff;
    box-shadow: 0 2px 2px rgba(0, 0, 0, 0.35);
}

.active button {
    height: 33px;
    background: linear-gradient(#f0f5f1, #9dbfa8);
    color: #2b8a57;
    font-weight: 700;
}

.add button {
    padding: 0 21px;
}
```
FILE: script.js
```javascript
// [row number, row classes, indent level, label, K..O, R..V, first digit of W]
const rows = [
    [46],
    [47],
    [48, 'banner', 0, 'Balance Sheet', '2025 2026 2027 2028 2029'],
    [49, 'quarters', 0, '', '', 'Q1 Q2 Q3 Q4 Q1'],
    [50, 'h28'],
    [51, 'h28 strong under', 1, 'Assets'],
    [52, 'h27'],
    [53, 'h27 strong', 2, 'Current Assets'],
    [54, 'h27', 3, 'Cash', '(3,426,108) 30,341,066 96,848,224 433,162,064 1,855,199,024', '(3,122,638) (3,769,111) (4,132,615) (3,426,108) 6,583,921'],
    [55, '', 3, 'Account Receivable (Days Sales Outstanding)', '3,449,866 16,875,345 73,446,977 294,016,807 987,617,322', '896,612 1,432,043 2,257,496 3,449,866 6,663,087'],
    [56, '', 3, 'Inventory (Days Inventory Outstanding)', '542,014 2,865,416 11,766,348 45,179,281 145,514,861', '175,509 269,960 371,215 542,014 1,162,352'],
    [57, 'strong', 2, 'Total Current Assets', '565,771 50,081,826 182,061,548 772,358,152 2,988,331,206', '(2,050,518) (2,067,107) (1,503,905) 565,771 14,409,360', '1'],
    [58],
    [59, 'strong', 2, 'Long Term Assets'],
    [60, '', 3, 'PP&E Assets', '1,610,169 1,819,836 2,784,125 5,939,303 13,382,328', '1,145,858 1,998,019 1,805,944 1,610,169 1,518,472'],
    [61, '', 3, 'Intangible Assets', '1,266,667 1,766,667 1,266,667 766,667 266,667', '475,000 1,416,667 1,341,667 1,266,667 2,141,667'],
    [62, 'strong', 2, 'Total Long Term Assets', '2,876,836 3,586,503 4,050,792 6,705,969 13,648,994', '1,620,858 3,414,686 3,147,611 2,876,836 3,660,139'],
    [63],
    [64, 'strong top under', 2, 'Total Assets', '3,442,607 53,668,329 186,112,340 779,064,121 3,001,980,201', '(429,659) 1,347,579 1,643,706 3,442,607 18,069,499', '2'],
    [65],
    [66],
    [67, 'strong under', 1, 'Liabilities'],
    [68],
    [69],
    [70, 'strong', 2, 'Current Liabilities'],
    [71, '', 3, 'Accounts Payable (Days Payable Outstanding)', '157,948 (59,959) (1,158,849) (7,109,585) (24,622,576)', '163,711 159,593 204,415 157,948 61,696'],
    [72, '', 3, 'Short Term Loans', '- - - - -', '- - - - -'],
    [73, '', 3, 'Deferred Revenue', '5,503,080 22,747,570 94,787,018 368,864,384 1,173,889,154', '1,089,688 2,453,043 3,932,074 5,503,080 8,350,728'],
    [74, 'strong', 2, 'Total Current Liabilities', '5,661,028 22,687,610 93,628,169 361,754,799 1,149,266,578', '1,253,399 2,612,636 4,136,489 5,661,028 8,412,424'],
    [75],
    [76, 'strong', 2, 'Long Term Liabilities'],
    [77, '', 3, 'Long Term Loans', '2,725,985 4,889,708 3,869,958 2,626,484 1,110,204', '970,024 2,918,870 2,824,818 2,725,985 5,532,201'],
    [78, 'strong', 2, 'Total Long Term Liabilities', '2,725,985 4,889,708 3,869,958 2,626,484 1,110,204', '970,024 2,918,870 2,824,818 2,725,985 5,532,201'],
    [79],
    [80],
    [81, 'strong top', 2, 'Total Liabilities', '8,387,013 27,577,318 97,498,127 364,381,284 1,150,376,782', '2,223,423 5,531,506 6,961,307 8,387,013 13,944,625', '1'],
    [82],
    [83, 'strong under', 1, 'Equity & Retained Earnings'],
    [84],
    [85, '', 3, 'Shareholders Equity', '1,050,000 26,050,000 26,050,000 26,050,000 26,050,000', '50,000 50,000 50,000 1,050,000 11,050,000'],
    [86, '', 3, 'Retained Earnings', '(5,994,406) 41,011 62,564,213 388,632,838 1,825,553,419', '(2,703,082) (4,233,927) (5,367,601) (5,994,406) (6,925,126)'],
    [87, 'strong', 2, 'Total Current Equity', '(4,944,406) 26,091,011 88,614,213 414,682,838 1,851,603,419', '(2,653,082) (4,183,927) (5,317,601) (4,944,406) 4,124,874'],
    [88],
    [89, 'strong top under', 2, 'Total Equity & Liabilities', '3,442,607 53,668,329 186,112,340 779,064,121 3,001,980,201', '(429,659) 1,347,579 1,643,706 3,442,607 18,069,499', '2'],
    [90],
    [91, 'check', 1, 'Check', '0 0 0 0 0', '0 0 0 0 0'],
    [92]
];

const body = document.getElementById('rows');

function addCell(tr, text, className, span) {
    const td = document.createElement('td');
    td.textContent = text || '';
    td.className = className || '';
    if (span) td.colSpan = span;
    tr.appendChild(td);
}

function addValues(tr, values) {
    const list = values ? values.split(' ') : ['', '', '', '', ''];
    list.forEach(value => {
        let className = '';
        if (value === '-') className = 'nil';
        // whole labels and negatives sit closer to the cell edge
        else if (/^(\(.*|Q\d|20\d\d|0)$/.test(value)) className = 'neg';
        addCell(tr, value, className);
    });
}

rows.forEach(([number, classes, level, label, years, quarters, next]) => {
    const tr = document.createElement('tr');
    tr.className = classes || '';
    const th = document.createElement('th');
    if (number === 46) {
        const clip = document.createElement('div');
        clip.className = 'clip';
        clip.textContent = number;
        th.appendChild(clip);
    } else {
        th.textContent = number;
    }
    tr.appendChild(th);
    addCell(tr, '', 'a');
    addCell(tr, label, 'label l' + (level || 0), 7);
    addCell(tr, '', 'freeze');
    addCell(tr);
    addValues(tr, years);
    addCell(tr);
    addCell(tr, '', number < 48 || number > 89 ? '' : 'q');
    if (number === 48) {
        addCell(tr, '2025', 'year', 4);
        addCell(tr);
    } else {
        addValues(tr, quarters);
    }
    addCell(tr, next, 'next');
    body.appendChild(tr);
});
```
